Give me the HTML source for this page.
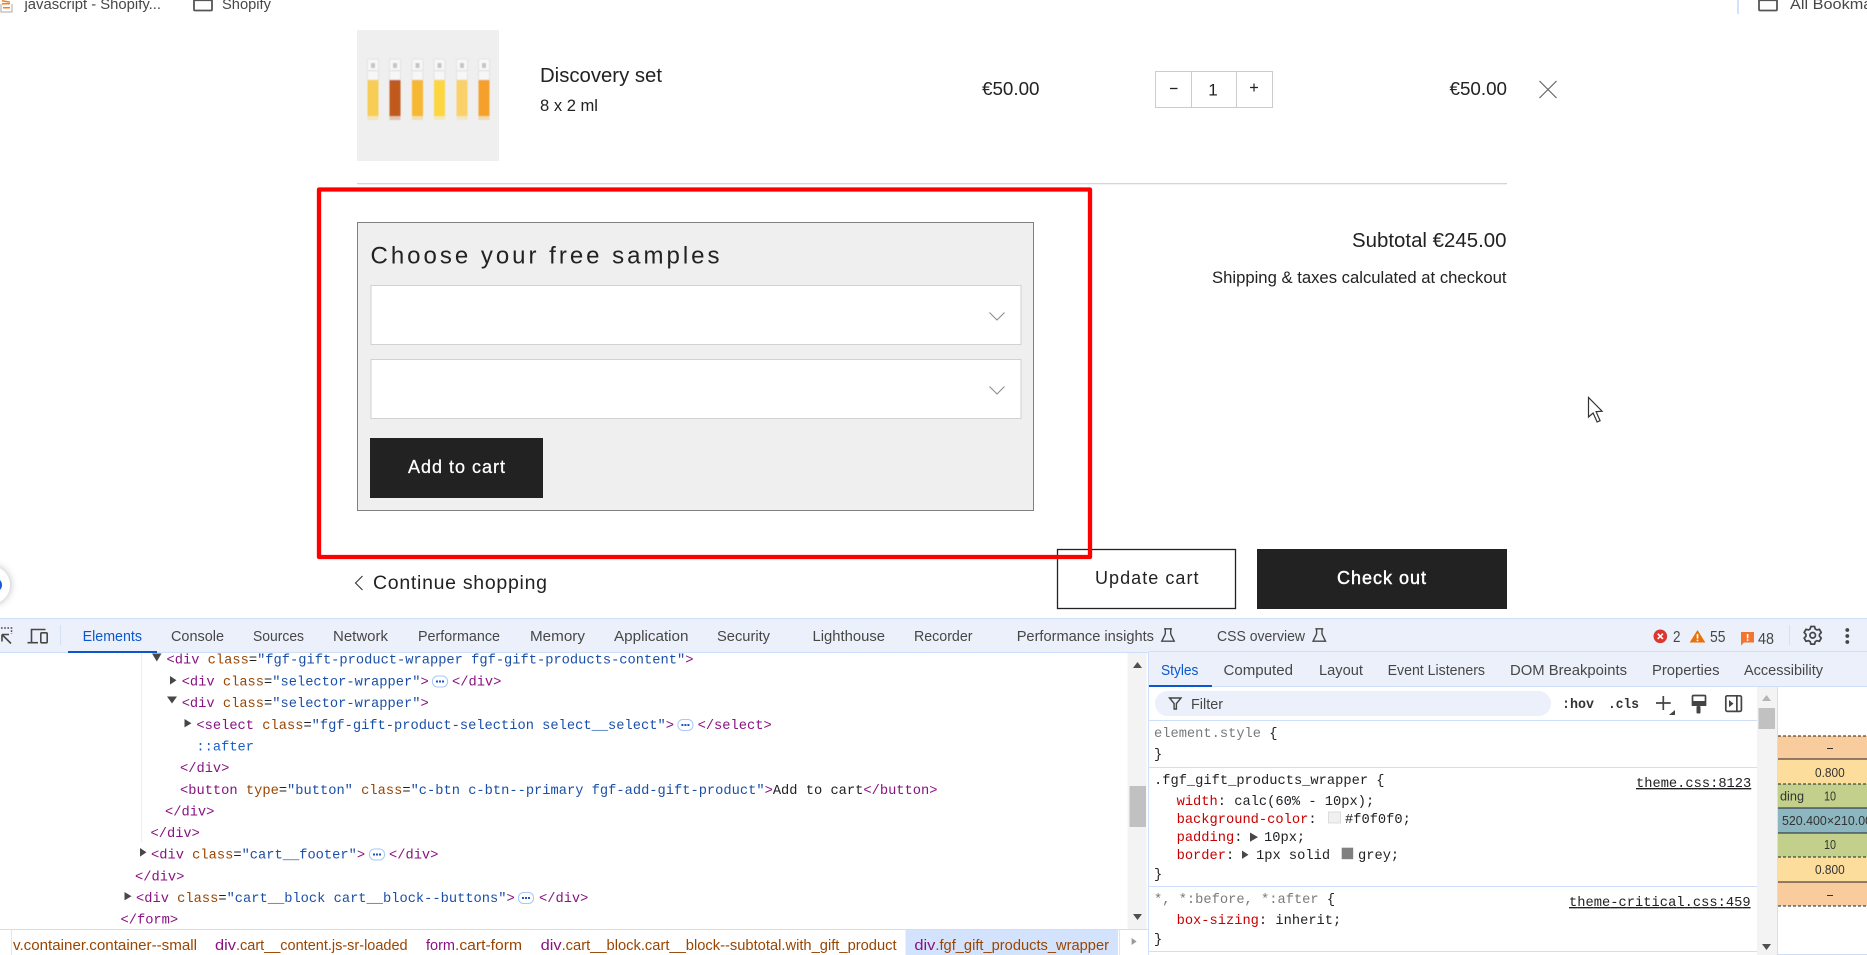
<!DOCTYPE html>
<html lang="en">
<head>
<meta charset="utf-8">
<title>Cart with DevTools</title>
<style>
html,body{margin:0;padding:0;background:#fff;width:1867px;height:955px;overflow:hidden}
svg{display:block}
text{white-space:pre}
.s{font-family:"Liberation Sans",Arial,sans-serif}
.m{font-family:"Liberation Mono",monospace;font-size:13.72px}
.t{fill:#881280}.a{fill:#994500}.v{fill:#1a4fa8}.k{fill:#202124}
.p{fill:#c80000}.g{fill:#7a7a7a}
.tab{font-family:"Liberation Sans",Arial,sans-serif;font-size:15px;fill:#474747}
.bx{font-family:"Liberation Sans",Arial,sans-serif;font-size:13px;fill:#333}
.ic{fill:none;stroke:#474747;stroke-width:1.6}
</style>
</head>
<body>
<svg xmlns="http://www.w3.org/2000/svg" width="1867" height="955" viewBox="0 0 1867 955">
<defs>
<filter id="bl" x="-20%" y="-20%" width="140%" height="140%"><feGaussianBlur stdDeviation="0.6"/></filter>
<filter id="sh" x="-50%" y="-50%" width="200%" height="200%"><feDropShadow dx="0" dy="0" stdDeviation="4" flood-color="#000" flood-opacity=".3"/></filter>
<g id="chip"><rect x="0.5" y="-5.5" width="15" height="11" rx="5" fill="#fff" stroke="#a8c7fa"/><rect x="4" y="-1" width="2" height="2" fill="#1a56c4"/><rect x="7" y="-1" width="2" height="2" fill="#1a56c4"/><rect x="10" y="-1" width="2" height="2" fill="#1a56c4"/></g>
<path id="flask" d="M3 .8h8M4.3 .8v5.2L.8 13.2h12.4L9.7 6V.8" fill="none" stroke="#474747" stroke-width="1.4"/>
<clipPath id="bm"><rect x="1778" y="620" width="89" height="335"/></clipPath>
</defs>

<rect width="1867" height="955" fill="#fff"/>

<!-- bookmarks bar -->
<g fill="#f48024"><rect x="2" y="0" width="8" height="1.5" transform="rotate(10 2 0)"/><rect x="2" y="3" width="8" height="1.5"/></g>
<path d="M1 4v8h11V4" fill="none" stroke="#bcbbbb" stroke-width="1.3"/><rect x="3" y="7" width="7" height="1.5" fill="#f48024"/>
<text class="s" x="24.5" y="9" font-size="15" fill="#474747" textLength="136.5" lengthAdjust="spacingAndGlyphs">javascript - Shopify...</text>
<path d="M194 -3v12.5q0 1 1 1h16q1 0 1-1V-3" fill="none" stroke="#555" stroke-width="1.8"/>
<path d="M194 0.5h18" fill="none" stroke="#555" stroke-width="1.2"/>
<text class="s" x="222" y="9" font-size="15" fill="#474747" textLength="49" lengthAdjust="spacingAndGlyphs">Shopify</text>
<rect x="1737" y="0" width="2" height="14" fill="#d3e3fd"/>
<path d="M1759 -3v12.5q0 1 1 1h16q1 0 1-1V-3" fill="none" stroke="#555" stroke-width="1.8"/>
<path d="M1759 0.5h18" fill="none" stroke="#555" stroke-width="1.2"/>
<text class="s" x="1790" y="9" font-size="15" fill="#474747" textLength="104" lengthAdjust="spacingAndGlyphs">All Bookmarks</text>

<!-- product -->
<rect x="357" y="30" width="142" height="131" fill="#efefef"/>
<g filter="url(#bl)">
<g fill="#f7f7f7" stroke="#dedede" stroke-width=".8"><rect x="367.5" y="59" width="11" height="21" rx="1"/><rect x="389.5" y="59" width="11" height="21" rx="1"/><rect x="412" y="59" width="11" height="21" rx="1"/><rect x="434" y="59" width="11" height="21" rx="1"/><rect x="456.5" y="59" width="11" height="21" rx="1"/><rect x="478.5" y="59" width="11" height="21" rx="1"/></g>
<g fill="#c4c4c4"><rect x="371" y="63" width="4" height="5"/><rect x="393" y="63" width="4" height="5"/><rect x="415.5" y="63" width="4" height="5"/><rect x="437.5" y="63" width="4" height="5"/><rect x="460" y="63" width="4" height="5"/><rect x="482" y="63" width="4" height="5"/></g>
<g fill="#e4e4e4"><rect x="368" y="70" width="10" height="1.5"/><rect x="390" y="70" width="10" height="1.5"/><rect x="412.5" y="70" width="10" height="1.5"/><rect x="434.5" y="70" width="10" height="1.5"/><rect x="457" y="70" width="10" height="1.5"/><rect x="479" y="70" width="10" height="1.5"/></g>
<rect x="367.5" y="80" width="11" height="36" fill="#f8cd55"/>
<rect x="389.5" y="80" width="11" height="36" fill="#c05a1e"/>
<rect x="412" y="80" width="11" height="36" fill="#f6b733"/>
<rect x="434" y="80" width="11" height="36" fill="#fbd63f"/>
<rect x="456.5" y="80" width="11" height="36" fill="#fad06b"/>
<rect x="478.5" y="80" width="11" height="36" fill="#f5a02c"/>
<g opacity=".3"><rect x="367.5" y="116" width="11" height="4" fill="#f8cd55"/><rect x="389.5" y="116" width="11" height="4" fill="#c05a1e"/><rect x="412" y="116" width="11" height="4" fill="#f6b733"/><rect x="434" y="116" width="11" height="4" fill="#fbd63f"/><rect x="456.5" y="116" width="11" height="4" fill="#fad06b"/><rect x="478.5" y="116" width="11" height="4" fill="#f5a02c"/></g>
</g>
<text class="s" x="540" y="82" font-size="20" fill="#222" textLength="122" lengthAdjust="spacingAndGlyphs">Discovery set</text>
<text class="s" x="540" y="111" font-size="16.5" fill="#222" textLength="58" lengthAdjust="spacingAndGlyphs">8 x 2 ml</text>
<text class="s" x="982" y="95" font-size="18.8" fill="#222" textLength="57.5" lengthAdjust="spacingAndGlyphs">€50.00</text>

<rect x="1155.5" y="71.5" width="117" height="36" fill="#fff" stroke="#ccc"/>
<path d="M1191.5 71.5v36M1236.5 71.5v36" stroke="#ccc" fill="none"/>
<path d="M1170 88.5h7.5" stroke="#222" stroke-width="1.3"/>
<path d="M1250 87.5h8M1254 83.5v8" stroke="#222" stroke-width="1.2"/>
<text class="s" x="1213" y="95.7" font-size="17" fill="#222" text-anchor="middle">1</text>
<text class="s" x="1449.5" y="95" font-size="18.8" fill="#222" textLength="57.5" lengthAdjust="spacingAndGlyphs">€50.00</text>
<path d="M1539.5 81l17 17M1556.5 81l-17 17" stroke="#666" stroke-width="1.2" fill="none"/>

<rect x="357" y="183" width="1150" height="1.3" fill="#d4d4d4"/>

<!-- gift panel -->
<rect x="357.5" y="222.5" width="676" height="288" fill="#efefef" stroke="#808080"/>
<text class="s" x="370.5" y="263.5" font-size="24" fill="#222" textLength="349">Choose your free samples</text>
<rect x="371" y="285.5" width="650" height="59" fill="#fff" stroke="#d2d2d2"/>
<rect x="371" y="359.5" width="650" height="59" fill="#fff" stroke="#d2d2d2"/>
<path d="M989.5 312.5l7.5 7.5 7.5-7.5M989.5 386.5l7.5 7.5 7.5-7.5" fill="none" stroke="#8a8a8a" stroke-width="1"/>
<rect x="370" y="438" width="173" height="60" fill="#222"/>
<text class="s" x="408" y="473" font-size="18" fill="#fff" textLength="97" stroke="#fff" stroke-width=".25">Add to cart</text>

<!-- totals -->
<text class="s" x="1352" y="247" font-size="20" fill="#222" textLength="154.5" lengthAdjust="spacingAndGlyphs">Subtotal €245.00</text>
<text class="s" x="1212" y="283" font-size="16.5" fill="#222" textLength="294.5" lengthAdjust="spacingAndGlyphs">Shipping &amp; taxes calculated at checkout</text>

<!-- footer buttons -->
<path d="M362.5 576l-7 7 7 7" fill="none" stroke="#333" stroke-width="1.1"/>
<text class="s" x="373" y="589" font-size="19.5" fill="#222" textLength="174">Continue shopping</text>
<rect x="1057.5" y="549.5" width="178" height="59" fill="#fff" stroke="#222" stroke-width="1.3"/>
<text class="s" x="1095" y="584" font-size="18" fill="#222" textLength="103.5">Update cart</text>
<rect x="1257" y="549" width="250" height="60" fill="#222"/>
<text class="s" x="1337" y="584" font-size="18" fill="#fff" textLength="89" stroke="#fff" stroke-width=".45">Check out</text>

<!-- red annotation -->
<rect x="319" y="189.5" width="771" height="367.5" fill="none" stroke="#fe0000" stroke-width="4.3" stroke-linejoin="round"/>

<!-- cursor -->
<path d="M1588.5 397.5v19.5l4.6-4 4 9 3-1.3-4-9 6-.5z" fill="#fff" stroke="#333" stroke-width="1.2"/>

<!-- left floating circle -->
<circle cx="-9" cy="585" r="19" fill="#fff" filter="url(#sh)"/>
<circle cx="-5" cy="585" r="7" fill="#1a56db"/>

<!-- DEVTOOLS -->
<rect x="0" y="618" width="1867" height="337" fill="#fff"/>
<rect x="0" y="618" width="1867" height="34" fill="#ebf0fa"/>
<rect x="0" y="618" width="1867" height="1" fill="#cfdff9"/>
<rect x="0" y="652" width="1149" height="1" fill="#cfdff9"/>

<!-- toolbar icons -->
<path d="M2 634.5h7M2 634.5v7M2 634.5l9 9" class="ic" stroke-width="1.8"/>
<path d="M1 628h10.5v6" fill="none" stroke="#474747" stroke-width="1.5" stroke-dasharray="1.6 1.6"/>
<path d="M31.5 642V629.5h14" class="ic" stroke-width="1.7"/>
<path d="M27.5 642.7h10.5" class="ic" stroke-width="1.8"/>
<rect x="40.8" y="632.8" width="6.4" height="10" rx="1" class="ic" stroke-width="1.7"/>
<rect x="60" y="625" width="1" height="20" fill="#d3e0f7"/>

<text class="tab" x="82.6" y="641" textLength="59.4" lengthAdjust="spacingAndGlyphs" style="fill:#0b57d0">Elements</text>
<rect x="68" y="651" width="89" height="2" fill="#0b57d0"/>
<text class="tab" x="171" y="641" textLength="53" lengthAdjust="spacingAndGlyphs">Console</text>
<text class="tab" x="253" y="641" textLength="51" lengthAdjust="spacingAndGlyphs">Sources</text>
<text class="tab" x="333" y="641" textLength="55" lengthAdjust="spacingAndGlyphs">Network</text>
<text class="tab" x="418" y="641" textLength="82" lengthAdjust="spacingAndGlyphs">Performance</text>
<text class="tab" x="530" y="641" textLength="55" lengthAdjust="spacingAndGlyphs">Memory</text>
<text class="tab" x="614" y="641" textLength="74.5" lengthAdjust="spacingAndGlyphs">Application</text>
<text class="tab" x="717" y="641" textLength="53" lengthAdjust="spacingAndGlyphs">Security</text>
<text class="tab" x="812.5" y="641" textLength="72.5" lengthAdjust="spacingAndGlyphs">Lighthouse</text>
<text class="tab" x="914" y="641" textLength="58.5" lengthAdjust="spacingAndGlyphs">Recorder</text>
<text class="tab" x="1016.7" y="641" textLength="137.3" lengthAdjust="spacingAndGlyphs">Performance insights</text>
<use href="#flask" x="1161" y="628"/>
<text class="tab" x="1217" y="641" textLength="88" lengthAdjust="spacingAndGlyphs">CSS overview</text>
<use href="#flask" x="1312.3" y="628"/>

<circle cx="1660.3" cy="636.3" r="6.8" fill="#dc362e"/>
<path d="M1657.7 633.7l5.2 5.2M1662.9 633.7l-5.2 5.2" stroke="#fff" stroke-width="1.6"/>
<text class="tab" x="1673" y="642" textLength="7.5" lengthAdjust="spacingAndGlyphs" style="font-size:16px">2</text>
<path d="M1697.5 630l7.8 12.5h-15.6z" fill="#e8710a"/>
<rect x="1696.7" y="634" width="1.6" height="4.6" fill="#fff"/><rect x="1696.7" y="639.6" width="1.6" height="1.6" fill="#fff"/>
<text class="tab" x="1710" y="642" textLength="15.5" lengthAdjust="spacingAndGlyphs" style="font-size:16px">55</text>
<path d="M1741 632h13v10.5h-10l-3 3z" fill="#f2762e"/>
<rect x="1746.8" y="634" width="1.6" height="4.4" fill="#fff"/><rect x="1746.8" y="639.3" width="1.6" height="1.6" fill="#fff"/>
<text class="tab" x="1758" y="644" textLength="16" lengthAdjust="spacingAndGlyphs" style="font-size:16px">48</text>
<rect x="1789" y="625" width="1" height="20" fill="#d3e0f7"/>
<g transform="translate(1812.7 635.3)" fill="none" stroke="#444" stroke-width="1.7" stroke-linejoin="round">
<path d="M-2.55-6.3L-1.87-8.8H1.87L2.55-6.3L4.19-5.36L6.69-6.02L8.56-2.78L6.73-.95V.95L8.56 2.78L6.69 6.02L4.19 5.36L2.55 6.3L1.87 8.8H-1.87L-2.55 6.3L-4.19 5.36L-6.69 6.02L-8.56 2.78L-6.73 .95V-.95L-8.56-2.78L-6.69-6.02L-4.19-5.36z"/>
<circle r="2.8"/>
</g>
<g fill="#444"><circle cx="1847.3" cy="630" r="1.9"/><circle cx="1847.3" cy="636" r="1.9"/><circle cx="1847.3" cy="642" r="1.9"/></g>

<!-- DOM tree -->
<rect x="141" y="653" width="1" height="189" fill="#e8eef9"/>
<g fill="#474747">
<path d="M152 653.5h9.5l-4.7 8z"/>
<path d="M170 676l6.5 4.3-6.5 4.3z"/>
<path d="M167 696.5h10l-5 7z"/>
<path d="M184.5 719l7 4.2-7 4.2z"/>
<path d="M140 848l6.5 4.3-6.5 4.3z"/>
<path d="M124.5 892l7 4.2-7 4.2z"/>
</g>
<text class="m" x="166.5" y="663.5"><tspan class="t">&lt;div</tspan> <tspan class="a">class</tspan><tspan class="k">=</tspan><tspan class="v">"fgf-gift-product-wrapper fgf-gift-products-content"</tspan><tspan class="t">&gt;</tspan></text>
<text class="m" x="181.7" y="685.5"><tspan class="t">&lt;div</tspan> <tspan class="a">class</tspan><tspan class="k">=</tspan><tspan class="v">"selector-wrapper"</tspan><tspan class="t">&gt;</tspan></text>
<use href="#chip" x="432" y="681.5"/>
<text class="m t" x="452" y="685.5">&lt;/div&gt;</text>
<text class="m" x="181.7" y="707"><tspan class="t">&lt;div</tspan> <tspan class="a">class</tspan><tspan class="k">=</tspan><tspan class="v">"selector-wrapper"</tspan><tspan class="t">&gt;</tspan></text>
<text class="m" x="196.4" y="729"><tspan class="t">&lt;select</tspan> <tspan class="a">class</tspan><tspan class="k">=</tspan><tspan class="v">"fgf-gift-product-selection select__select"</tspan><tspan class="t">&gt;</tspan></text>
<use href="#chip" x="677.4" y="725"/>
<text class="m t" x="697.6" y="729">&lt;/select&gt;</text>
<text class="m" x="196.4" y="750.5" fill="#1a5fc4">::after</text>
<text class="m t" x="180" y="772">&lt;/div&gt;</text>
<text class="m" x="180" y="794"><tspan class="t">&lt;button</tspan> <tspan class="a">type</tspan><tspan class="k">=</tspan><tspan class="v">"button"</tspan> <tspan class="a">class</tspan><tspan class="k">=</tspan><tspan class="v">"c-btn c-btn--primary fgf-add-gift-product"</tspan><tspan class="t">&gt;</tspan><tspan class="k">Add to cart</tspan><tspan class="t">&lt;/button&gt;</tspan></text>
<text class="m t" x="165" y="815.5">&lt;/div&gt;</text>
<text class="m t" x="150.5" y="837">&lt;/div&gt;</text>
<text class="m" x="151" y="858.5"><tspan class="t">&lt;div</tspan> <tspan class="a">class</tspan><tspan class="k">=</tspan><tspan class="v">"cart__footer"</tspan><tspan class="t">&gt;</tspan></text>
<use href="#chip" x="369" y="854.5"/>
<text class="m t" x="389" y="858.5">&lt;/div&gt;</text>
<text class="m t" x="135" y="880.5">&lt;/div&gt;</text>
<text class="m" x="136" y="902"><tspan class="t">&lt;div</tspan> <tspan class="a">class</tspan><tspan class="k">=</tspan><tspan class="v">"cart__block cart__block--buttons"</tspan><tspan class="t">&gt;</tspan></text>
<use href="#chip" x="518" y="898"/>
<text class="m t" x="539" y="902">&lt;/div&gt;</text>
<text class="m t" x="120.5" y="923.5">&lt;/form&gt;</text>

<!-- DOM scrollbar -->
<rect x="1127.5" y="653" width="19" height="276" fill="#f3f3f3"/>
<rect x="1129.5" y="786" width="16.5" height="41" fill="#c1c1c1"/>
<path d="M1137.5 662l4.5 6h-9z" fill="#505050"/>
<path d="M1137.5 920l4.5-6h-9z" fill="#505050"/>
<rect x="1148" y="652" width="1" height="303" fill="#cfdff9"/>

<!-- breadcrumbs -->
<rect x="0" y="929" width="1149" height="1" fill="#cfdff9"/>
<rect x="11" y="930" width="1" height="25" fill="#dde6f5"/>
<text class="s" x="13" y="950" font-size="15" fill="#994500" textLength="184" lengthAdjust="spacingAndGlyphs">v.container.container--small</text>
<text class="s" x="215" y="950" font-size="15" fill="#881280" textLength="21" lengthAdjust="spacingAndGlyphs">div</text>
<text class="s" x="236" y="950" font-size="15" fill="#994500" textLength="171.6" lengthAdjust="spacingAndGlyphs">.cart__content.js-sr-loaded</text>
<text class="s" x="426" y="950" font-size="15" fill="#881280" textLength="29" lengthAdjust="spacingAndGlyphs">form</text>
<text class="s" x="455" y="950" font-size="15" fill="#994500" textLength="67" lengthAdjust="spacingAndGlyphs">.cart-form</text>
<text class="s" x="540.6" y="950" font-size="15" fill="#881280" textLength="21" lengthAdjust="spacingAndGlyphs">div</text>
<text class="s" x="561.6" y="950" font-size="15" fill="#994500" textLength="335" lengthAdjust="spacingAndGlyphs">.cart__block.cart__block--subtotal.with_gift_product</text>
<rect x="905.5" y="930" width="212.5" height="25" fill="#d3e3fd"/>
<text class="s" x="914.4" y="950" font-size="15" fill="#881280" textLength="21" lengthAdjust="spacingAndGlyphs">div</text>
<text class="s" x="935.4" y="950" font-size="15" fill="#994500" textLength="173.6" lengthAdjust="spacingAndGlyphs">.fgf_gift_products_wrapper</text>
<rect x="1119" y="930" width="1" height="25" fill="#dde6f5"/>
<path d="M1131.6 938l5 3.5-5 3.5z" fill="#9a9a9a"/>

<!-- Styles subtabs -->
<rect x="1149" y="652" width="718" height="34" fill="#ebf0fa"/>
<rect x="1149" y="686" width="718" height="1" fill="#cfdff9"/>
<rect x="1149" y="651" width="718" height="1" fill="#cfdff9"/>
<text class="tab" x="1161" y="675" textLength="37.4" lengthAdjust="spacingAndGlyphs" style="fill:#0b57d0">Styles</text>
<rect x="1149" y="685" width="63" height="2" fill="#0b57d0"/>
<text class="tab" x="1223.5" y="675" textLength="69.5" lengthAdjust="spacingAndGlyphs">Computed</text>
<text class="tab" x="1319" y="675" textLength="44" lengthAdjust="spacingAndGlyphs">Layout</text>
<text class="tab" x="1387.6" y="675" textLength="97.4" lengthAdjust="spacingAndGlyphs">Event Listeners</text>
<text class="tab" x="1510" y="675" textLength="117" lengthAdjust="spacingAndGlyphs">DOM Breakpoints</text>
<text class="tab" x="1652" y="675" textLength="67.5" lengthAdjust="spacingAndGlyphs">Properties</text>
<text class="tab" x="1744" y="675" textLength="79" lengthAdjust="spacingAndGlyphs">Accessibility</text>

<!-- filter row -->
<rect x="1155" y="691" width="396" height="25" rx="12.5" fill="#ebf0fa"/>
<path d="M1169.5 698h11.5l-4.6 5.5v5.5h-2.3v-5.5z" fill="none" stroke="#444" stroke-width="1.4"/>
<text class="tab" x="1191" y="709" textLength="32" lengthAdjust="spacingAndGlyphs">Filter</text>
<text x="1562" y="708" font-family="Liberation Mono,monospace" font-size="13.5" font-weight="bold" fill="#333" textLength="32" lengthAdjust="spacingAndGlyphs">:hov</text>
<text x="1608" y="708" font-family="Liberation Mono,monospace" font-size="13.5" font-weight="bold" fill="#333" textLength="31" lengthAdjust="spacingAndGlyphs">.cls</text>
<path d="M1656 703h14.7M1663.3 696v14" stroke="#444" stroke-width="1.7" fill="none"/>
<path d="M1675 710v5h-6z" fill="#444"/>
<path d="M1692.5 696.5q0-1 1-1h11q1 0 1 1v8.5h-13z" fill="#fff" stroke="#444" stroke-width="1.7"/>
<rect x="1692" y="701" width="14" height="5" fill="#444"/>
<rect x="1696.5" y="706" width="4" height="7.5" rx="1" fill="#444"/>
<rect x="1725.8" y="695.8" width="15.6" height="15.6" rx="1.5" fill="none" stroke="#444" stroke-width="1.7"/>
<rect x="1736" y="696" width="1.7" height="15" fill="#444"/>
<path d="M1729 700l4.5 3.6-4.5 3.6z" fill="#444"/>
<rect x="1149" y="720" width="608" height="1" fill="#cfdff9"/>

<!-- styles content -->
<text class="m g" x="1154" y="737">element.style <tspan class="k">{</tspan></text>
<text class="m k" x="1154" y="758">}</text>
<rect x="1149" y="767" width="608" height="1" fill="#cfdff9"/>
<text class="m k" x="1154" y="784">.fgf_gift_products_wrapper {</text>
<text class="m k" x="1636" y="787" text-decoration="underline">theme.css:8123</text>
<text class="m" x="1176.6" y="805"><tspan class="p">width</tspan><tspan class="k">: calc(60% - 10px);</tspan></text>
<text class="m" x="1176.6" y="823"><tspan class="p">background-color</tspan><tspan class="k">:</tspan></text>
<rect x="1328.5" y="812" width="12" height="11" fill="#f0f0f0" stroke="#dcdcdc"/>
<text class="m k" x="1345" y="823">#f0f0f0;</text>
<text class="m" x="1176.6" y="841"><tspan class="p">padding</tspan><tspan class="k">:</tspan></text>
<path d="M1250 832.5l8 4.6-8 4.6z" fill="#474747"/>
<text class="m k" x="1264" y="841">10px;</text>
<text class="m" x="1176.6" y="859"><tspan class="p">border</tspan><tspan class="k">:</tspan></text>
<path d="M1242 850.5l6.5 4.2-6.5 4.2z" fill="#474747"/>
<text class="m k" x="1256" y="859">1px solid</text>
<rect x="1341.7" y="847.7" width="11.5" height="11.5" fill="#808080"/>
<text class="m k" x="1358" y="859">grey;</text>
<text class="m k" x="1154" y="878">}</text>
<rect x="1149" y="886" width="608" height="1" fill="#cfdff9"/>
<text class="m g" x="1154" y="903">*, *:before, *:after <tspan class="k">{</tspan></text>
<text class="m k" x="1569" y="906" text-decoration="underline" textLength="181.6">theme-critical.css:459</text>
<text class="m" x="1176.6" y="924"><tspan class="p">box-sizing</tspan><tspan class="k">: inherit;</tspan></text>
<text class="m k" x="1154" y="943">}</text>
<rect x="1149" y="951" width="608" height="1" fill="#cfdff9"/>

<!-- styles scrollbar -->
<rect x="1757" y="687" width="20" height="268" fill="#f3f3f3"/>
<rect x="1758.5" y="708" width="16.5" height="21" fill="#c1c1c1"/>
<path d="M1766.5 695l4.5 6h-9z" fill="#b5b5b5"/>
<path d="M1766.5 950l4.5-6h-9z" fill="#505050"/>
<rect x="1777" y="687" width="1" height="268" fill="#cfdff9"/>
<rect x="1778" y="954" width="89" height="1" fill="#cfdff9"/>

<!-- box model -->
<g clip-path="url(#bm)">
<rect x="1778" y="736" width="89" height="23" fill="#f9cc9d"/>
<rect x="1778" y="759" width="89" height="25" fill="#fddd9b"/>
<rect x="1778" y="784" width="89" height="24" fill="#c3d08b"/>
<rect x="1778" y="808" width="89" height="25" fill="#8cb6c0"/>
<rect x="1778" y="833" width="89" height="24" fill="#c3d08b"/>
<rect x="1778" y="857" width="89" height="25" fill="#fddd9b"/>
<rect x="1778" y="882" width="89" height="24" fill="#f9cc9d"/>
<path d="M1778 736h89M1778 784h89M1778 857h89M1778 906h89" stroke="#222" stroke-width="1" stroke-dasharray="3 2" fill="none"/>
<path d="M1778 759h89M1778 808h89M1778 833h89M1778 882h89" stroke="#222" stroke-width="1" fill="none"/>
<path d="M1827 748.5h6M1827 895.5h6" stroke="#333" stroke-width="1"/>
<text class="bx" x="1815" y="777" textLength="29.7" lengthAdjust="spacingAndGlyphs">0.800</text>
<text class="bx" x="1780" y="800.6" textLength="24" lengthAdjust="spacingAndGlyphs">ding</text>
<text class="bx" x="1824" y="800.6" textLength="12" lengthAdjust="spacingAndGlyphs">10</text>
<text class="bx" x="1782" y="825" textLength="90" lengthAdjust="spacingAndGlyphs">520.400×210.00</text>
<text class="bx" x="1824" y="849" textLength="12" lengthAdjust="spacingAndGlyphs">10</text>
<text class="bx" x="1815" y="874" textLength="29.7" lengthAdjust="spacingAndGlyphs">0.800</text>
</g>
</svg>
</body>
</html>
